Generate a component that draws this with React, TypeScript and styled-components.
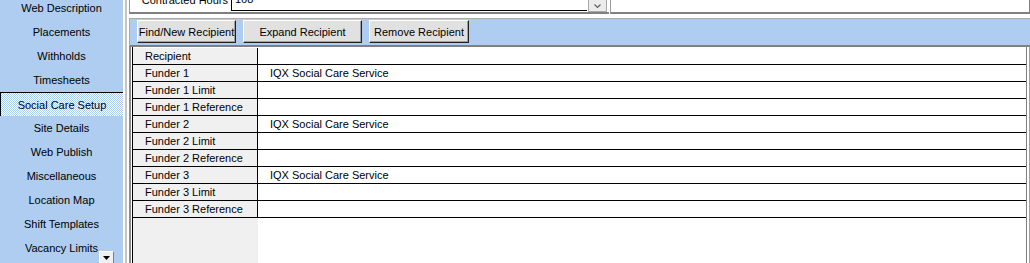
import React from "react";
import styled, { createGlobalStyle } from "styled-components";

const GlobalStyle = createGlobalStyle`
  html, body {
    margin: 0;
    padding: 0;
    background: #ffffff;
  }
  body {
    font-family: "Liberation Sans", Arial, sans-serif;
    font-size: 11px;
    color: #000;
  }
`;

const navItems = [
  "Web Description",
  "Placements",
  "Withholds",
  "Timesheets",
  "Social Care Setup",
  "Site Details",
  "Web Publish",
  "Miscellaneous",
  "Location Map",
  "Shift Templates",
  "Vacancy Limits",
];

const rows = [
  { label: "Recipient", value: "" },
  { label: "Funder 1", value: "IQX Social Care Service" },
  { label: "Funder 1 Limit", value: "" },
  { label: "Funder 1 Reference", value: "" },
  { label: "Funder 2", value: "IQX Social Care Service" },
  { label: "Funder 2 Limit", value: "" },
  { label: "Funder 2 Reference", value: "" },
  { label: "Funder 3", value: "IQX Social Care Service" },
  { label: "Funder 3 Limit", value: "" },
  { label: "Funder 3 Reference", value: "" },
];

const App: React.FC = () => {
  return (
    <>
      <GlobalStyle />
      <Screen>
        <Sidebar>
          <NavList>
            {navItems.map((item) => (
              <NavItem key={item} $active={item === "Social Care Setup"}>
                {item}
              </NavItem>
            ))}
          </NavList>
          <ScrollDown>
            <svg width="7" height="4" viewBox="0 0 7 4">
              <polygon points="0,0 7,0 3.5,4" fill="#000" />
            </svg>
          </ScrollDown>
        </Sidebar>
        <Splitter />
        <Main>
          <TopBar>
            <FieldBox>
              <FieldRow>
                <FieldLabel>Contracted Hours</FieldLabel>
                <FieldValue>168</FieldValue>
                <DropButton>
                  <svg width="7" height="5" viewBox="0 0 7 5">
                    <polyline
                      points="0.5,0.5 3.5,3.5 6.5,0.5"
                      fill="none"
                      stroke="#606060"
                      strokeWidth="1.2"
                    />
                  </svg>
                </DropButton>
              </FieldRow>
            </FieldBox>
            <SideBox />
          </TopBar>
          <Toolbar>
            <ToolButton $width={99}>Find/New Recipient</ToolButton>
            <ToolButton $width={119}>Expand Recipient</ToolButton>
            <ToolButton $width={100}>Remove Recipient</ToolButton>
          </Toolbar>
          <GridWrap>
            <Grid>
              {rows.map((r) => (
                <Row key={r.label}>
                  <LabelCell>{r.label}</LabelCell>
                  <ValueCell>{r.value}</ValueCell>
                </Row>
              ))}
              <Filler>
                <LabelFill />
                <div />
              </Filler>
            </Grid>
          </GridWrap>
        </Main>
      </Screen>
    </>
  );
};

export default App;

const Screen = styled.div`
  display: flex;
  width: 1030px;
  height: 263px;
  overflow: hidden;
`;

const Sidebar = styled.div`
  position: relative;
  flex: none;
  width: 123px;
  height: 100%;
  background: #aecdf1;
  overflow: hidden;
`;

const NavList = styled.div`
  display: flex;
  flex-direction: column;
  margin-top: -4px;
`;

const NavItem = styled.div<{ $active?: boolean }>`
  box-sizing: border-box;
  height: 24px;
  display: flex;
  align-items: center;
  justify-content: center;
  white-space: nowrap;
  ${(p) =>
    p.$active &&
    `
    border-top: 1px solid #000;
    border-left: 1px solid #000;
    background: repeating-conic-gradient(#ffffff 0 25%, #aecdf1 0 50%) 0 0 / 2px 2px;
  `}
`;

const ScrollDown = styled.div`
  position: absolute;
  right: 9px;
  bottom: 0;
  box-sizing: border-box;
  width: 15px;
  height: 12px;
  background: #f0f0f0;
  border-top: 1px solid #ffffff;
  border-left: 1px solid #ffffff;
  border-right: 1px solid #808080;
  display: flex;
  align-items: center;
  justify-content: center;
`;

const Splitter = styled.div`
  flex: none;
  width: 2px;
  margin: 0 2px 0 2px;
  background: #c4c4c4;
`;

const Main = styled.div`
  flex: 1;
  display: flex;
  flex-direction: column;
  min-width: 0;
`;

const TopBar = styled.div`
  display: flex;
  gap: 1px;
  height: 14px;
`;

const FieldBox = styled.div`
  flex: none;
  width: 480px;
  box-sizing: border-box;
  border-left: 1px solid #9a9a9a;
  border-bottom: 2px solid #808080;
  overflow: hidden;
`;

const FieldRow = styled.div`
  display: flex;
  align-items: flex-start;
  margin-top: -6px;
`;

const FieldLabel = styled.div`
  flex: none;
  box-sizing: border-box;
  width: 102px;
  height: 17px;
  padding: 0 3px 6px 0;
  border-right: 1px solid #000;
  display: flex;
  align-items: center;
  justify-content: flex-end;
  white-space: nowrap;
`;

const FieldValue = styled.div`
  flex: 1;
  box-sizing: border-box;
  height: 17px;
  padding: 0 0 6px 3px;
  border-bottom: 1px solid #000;
  display: flex;
  align-items: center;
`;

const DropButton = styled.div`
  flex: none;
  box-sizing: border-box;
  width: 19px;
  height: 18px;
  margin: 0 2px 0 1px;
  padding-top: 6px;
  background: #ececec;
  border: 1px solid #a8a8a8;
  display: flex;
  align-items: center;
  justify-content: center;
`;

const SideBox = styled.div`
  flex: 1;
  box-sizing: border-box;
  border-left: 1px solid #9a9a9a;
  border-right: 1px solid #808080;
  border-bottom: 2px solid #808080;
`;

const Toolbar = styled.div`
  box-sizing: border-box;
  display: flex;
  align-items: flex-start;
  gap: 7px;
  height: 29px;
  margin-top: 4px;
  padding: 1px 0 0 7px;
  background: #aecdf1;
  border-top: 1px solid #a9a9a9;
  border-left: 1px solid #a9a9a9;
  border-bottom: 2px solid #808080;
`;

const ToolButton = styled.div<{ $width: number }>`
  box-sizing: border-box;
  width: ${(p) => p.$width}px;
  height: 23px;
  background: #e1e1e1;
  border-top: 1px solid #ffffff;
  border-left: 1px solid #ffffff;
  border-right: 1px solid #202020;
  border-bottom: 1px solid #202020;
  box-shadow: inset -1px -1px 0 #a0a0a0;
  display: flex;
  align-items: center;
  justify-content: center;
  white-space: nowrap;
`;

const GridWrap = styled.div`
  flex: 1;
  display: flex;
  border-left: 2px solid #8c8c8c;
  border-right: 1px solid #a0a0a0;
  padding: 0 2px 0 1px;
  min-height: 0;
`;

const Grid = styled.div`
  flex: 1;
  display: flex;
  flex-direction: column;
  padding-top: 1px;
  border-left: 1px solid #000;
  border-right: 1px solid #808080;
`;

const Row = styled.div`
  display: grid;
  grid-template-columns: 125px 1fr;
  height: 17px;
  box-sizing: border-box;
  border-bottom: 1px solid #000;
`;

const LabelCell = styled.div`
  background: #f0f0f0;
  border-right: 1px solid #000;
  padding-left: 12px;
  display: flex;
  align-items: center;
  white-space: nowrap;
`;

const ValueCell = styled.div`
  padding-left: 12px;
  display: flex;
  align-items: center;
  white-space: nowrap;
`;

const Filler = styled.div`
  flex: 1;
  display: grid;
  grid-template-columns: 125px 1fr;
`;

const LabelFill = styled.div`
  background: #f0f0f0;
`;
